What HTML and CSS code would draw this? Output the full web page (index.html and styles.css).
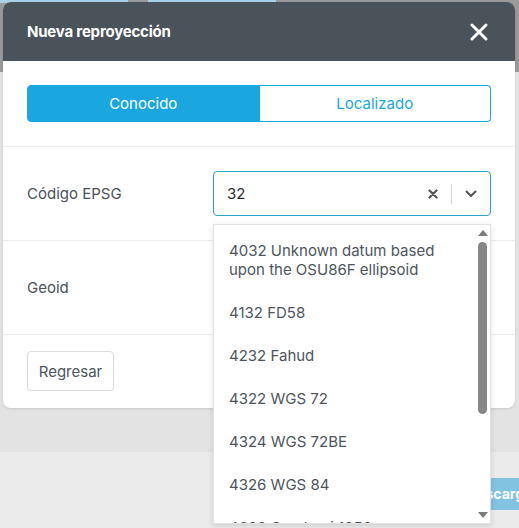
FILE: index.html
```html
<!DOCTYPE html>
<html lang="es">
<head>
<meta charset="utf-8">
<title>Nueva reproyección</title>
<link rel="stylesheet" href="styles.css">
</head>
<body>
<div class="backdrop">
  <div class="bd-top">
    <div class="bd-tabs">
      <span class="bd-tab"></span><span class="bd-gap"></span><span class="bd-tab"></span>
    </div>
  </div>
  <div class="bd-mid"></div>
  <div class="bd-bottom">
    <span class="bd-btn">Descargar</span>
  </div>
</div>

<div class="modal">
  <div class="modal-header">
    <h1 class="modal-title">Nueva reproyección</h1>
    <button class="close-btn" aria-label="Cerrar">
      <svg width="18" height="18" viewBox="0 0 18 18"><path d="M2 2L16 16M16 2L2 16" stroke="#fff" stroke-width="3" stroke-linecap="round"/></svg>
    </button>
  </div>

  <div class="tabs-section">
    <div class="tabs">
      <button class="tab active">Conocido</button>
      <button class="tab">Localizado</button>
    </div>
  </div>

  <div class="form-row">
    <label class="form-label">Código EPSG</label>
    <div class="select focused">
      <span class="select-value">32</span>
      <span class="select-clear">
        <svg width="10" height="10" viewBox="0 0 10 10"><path d="M1.5 1.5L8.5 8.5M8.5 1.5L1.5 8.5" stroke="#555" stroke-width="2.2" stroke-linecap="round"/></svg>
      </span>
      <span class="select-sep"></span>
      <span class="select-arrow">
        <svg width="12" height="8" viewBox="0 0 12 8"><path d="M1.5 1.5L6 6L10.5 1.5" fill="none" stroke="#555" stroke-width="2" stroke-linecap="round" stroke-linejoin="round"/></svg>
      </span>

      <div class="menu">
        <ul class="menu-list">
          <li class="menu-item">4032 Unknown datum based upon the OSU86F ellipsoid</li>
          <li class="menu-item">4132 FD58</li>
          <li class="menu-item">4232 Fahud</li>
          <li class="menu-item">4322 WGS 72</li>
          <li class="menu-item">4324 WGS 72BE</li>
          <li class="menu-item">4326 WGS 84</li>
          <li class="menu-item">4632 Combani 1950</li>
        </ul>
        <div class="scrollbar">
          <span class="sb-arrow up"></span>
          <span class="sb-track"><span class="sb-thumb"></span></span>
          <span class="sb-arrow down"></span>
        </div>
      </div>
    </div>
  </div>

  <div class="form-row">
    <label class="form-label">Geoid</label>
    <div class="select">
      <span class="select-value"></span>
    </div>
  </div>

  <div class="modal-footer">
    <button class="btn-back">Regresar</button>
  </div>
</div>
</body>
</html>
```

FILE: styles.css
```css
* { box-sizing: border-box; }

html, body {
  margin: 0;
  padding: 0;
  width: 519px;
  height: 528px;
  overflow: hidden;
}

body {
  font-family: Inter, "Noto Sans", sans-serif;
  background: #e3e3e3;
  position: relative;
}

/* dimmed page behind the dialog */
.backdrop {
  display: flex;
  flex-direction: column;
  height: 528px;
}
.bd-top {
  height: 72px;
  background: #9a9a9a;
}
.bd-tabs {
  display: flex;
  height: 3px;
}
.bd-tab {
  width: 128px;
  background: #a8d3e8;
}
.bd-gap {
  width: 20px;
  background: #9c9c9c;
}
.bd-mid {
  height: 380px;
  background: #e3e3e3;
}
.bd-bottom {
  flex: 1;
  background: #ebebeb;
  display: flex;
  justify-content: flex-end;
  padding-top: 26px;
  overflow: hidden;
}
.bd-btn {
  height: 32px;
  width: 29px;
  background: #82c3e2;
  color: #fff;
  font-weight: 700;
  font-size: 14px;
  line-height: 32px;
  white-space: nowrap;
  overflow: hidden;
  text-indent: -23px;
}

/* dialog */
.modal {
  position: absolute;
  left: 3px;
  top: 2px;
  width: 512px;
  background: #fff;
  border-radius: 8px;
  box-shadow: 0 1px 3px rgba(0,0,0,0.12);
}

.modal-header {
  height: 59px;
  background: #4a525a;
  border-radius: 8px 8px 0 0;
  display: flex;
  align-items: center;
  justify-content: space-between;
  padding: 0 26px 0 24px;
}
.modal-title {
  margin: 0;
  color: #fff;
  font-size: 15px;
  font-weight: 700;
  letter-spacing: -0.2px;
}
.close-btn {
  border: 0;
  background: none;
  padding: 0;
  width: 20px;
  height: 20px;
  display: flex;
  align-items: center;
  justify-content: center;
}

.tabs-section {
  padding: 24px;
  border-bottom: 1px solid #ececec;
}
.tabs {
  display: flex;
  height: 37px;
}
.tab {
  flex: 1;
  font-family: inherit;
  font-size: 15px;
  border: 1px solid #1aa7e0;
  background: #fff;
  color: #1aa7e0;
  padding: 0;
}
.tab:first-child { border-radius: 4px 0 0 4px; }
.tab:last-child { border-radius: 0 4px 4px 0; border-left: 0; }
.tab.active {
  background: #1aa7e0;
  color: #fff;
}

.form-row {
  display: grid;
  grid-template-columns: 186px 1fr;
  align-items: center;
  padding: 24px;
  border-bottom: 1px solid #ececec;
}
.form-label {
  font-size: 15px;
  color: #4a525a;
}

.select {
  position: relative;
  height: 45px;
  border: 1px solid #d5d5d5;
  border-radius: 4px;
  display: flex;
  align-items: center;
  padding: 0 0 0 13px;
}
.select.focused {
  border-color: #2aa2cf;
}
.select-value {
  flex: 1;
  font-size: 15px;
  color: #2b2f33;
}
.select-clear {
  display: flex;
  width: 20px;
  justify-content: center;
  margin-right: 8px;
}
.select-sep {
  width: 1px;
  height: 20px;
  background: #d4d4d4;
}
.select-arrow {
  display: flex;
  width: 38px;
  justify-content: center;
  padding-top: 1px;
}

/* open options list */
.menu {
  position: absolute;
  z-index: 2;
  left: -1px;
  right: -1px;
  top: 52px;
  height: 300px;
  background: #fff;
  border: 1px solid #e2e2e2;
  box-shadow: 0 2px 6px rgba(0,0,0,0.12);
  display: flex;
  overflow: hidden;
}
.menu-list {
  list-style: none;
  margin: 0;
  padding: 4px 0 0;
  flex: 1;
}
.menu-item {
  padding: 12px 30px 12px 15px;
  font-size: 15px;
  line-height: 19px;
  color: #4e5560;
}
.scrollbar {
  width: 13px;
  display: flex;
  flex-direction: column;
  align-items: center;
  padding: 5px 2px 5px 0;
}
.sb-arrow {
  width: 0;
  height: 0;
  border-left: 5px solid transparent;
  border-right: 5px solid transparent;
}
.sb-arrow.up { border-bottom: 6px solid #7a7a7a; }
.sb-arrow.down { border-top: 6px solid #7a7a7a; }
.sb-track {
  flex: 1;
  width: 100%;
  padding: 6px 0;
  display: flex;
  justify-content: center;
}
.sb-thumb {
  width: 9px;
  height: 172px;
  background: #878787;
  border-radius: 5px;
}

.modal-footer {
  padding: 16px 24px 17px;
}
.btn-back {
  height: 40px;
  width: 87px;
  font-family: inherit;
  font-size: 15px;
  color: #4e5560;
  background: #fff;
  border: 1px solid #dcdcdc;
  border-radius: 4px;
}
```
